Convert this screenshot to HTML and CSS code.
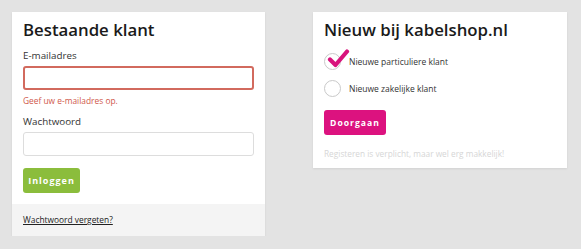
FILE: index.html
```html
<!DOCTYPE html>
<html>
    <head>
        <meta charset="utf-8">
        <title>Inloggen - kabelshop.nl</title>
        <link rel="stylesheet" href="styles.css">
    </head>
    <body>
        <main class="login">
            <section class="card">
                <div class="card-body">
                    <h2>Bestaande klant</h2>
                    <label class="field-label" for="email">E-mailadres</label>
                    <input class="field error" id="email" type="email">
                    <p class="field-error">Geef uw e-mailadres op.</p>
                    <label class="field-label" for="password">Wachtwoord</label>
                    <input class="field" id="password" type="password">
                    <button class="btn btn-green">Inloggen</button>
                </div>
                <div class="card-footer">
                    <a href="#">Wachtwoord vergeten?</a>
                </div>
            </section>
            <section class="card card-short">
                <div class="card-body">
                    <h2>Nieuw bij kabelshop.nl</h2>
                    <label class="choice">
                        <span class="radio checked">
                            <svg width="24" height="22" viewBox="0 0 24 22"><path d="M4 10.5 L9.5 16 L21 2.5" fill="none" stroke="#d8137c" stroke-width="4.2" stroke-linecap="round" stroke-linejoin="round"/></svg>
                        </span>
                        Nieuwe particuliere klant
                    </label>
                    <label class="choice">
                        <span class="radio"></span>
                        Nieuwe zakelijke klant
                    </label>
                    <button class="btn btn-pink">Doorgaan</button>
                    <p class="hint">Registeren is verplicht, maar wel erg makkelijk!</p>
                </div>
            </section>
        </main>
    </body>
</html>
```

FILE: styles.css
```css
html {background:#e3e3e3; color:#333; font-family:"Open Sans", "Liberation Sans", sans-serif;}
body {margin:0; padding:12px 14px 0 12px;}
.login {display:flex; gap:48px; align-items:flex-start;}
.card {width:253px; background:#fff; box-shadow:0 1px 2px rgba(0,0,0,0.08);}
.card-short {width:254px;}
.card-body {padding:6px 11px 11px 11px;}
.card-short .card-body {padding-bottom:8px;}
.card h2 {margin:0; font-size:16.8px; font-weight:600; color:#1a1a1a; line-height:24px;}
.field-label {display:block; font-size:9.8px; margin-top:7px; line-height:14px;}
.field-error + .field-label {margin-top:8px;}
.field {display:block; box-sizing:border-box; width:231px; height:24px; margin-top:3px; border:1px solid #ddd; border-radius:3px; background:#fff;}
.field.error {border:2px solid #d26a5e;}
.field-error {margin:5px 0 0; font-size:8.4px; color:#d0584b; line-height:12px;}
.btn {display:block; border:0; border-radius:3px; color:#fff; font-family:"Open Sans", sans-serif; font-weight:700; font-size:9px; letter-spacing:1px; padding:0; height:25px;}
.btn-green {width:57px; margin-top:12px; background:#8bbd3c;}
.btn-pink {width:62px; margin-top:13px; background:#dc127f; font-size:8.6px;}
.card-footer {background:#f4f4f4; padding:10px 11px 10px; font-size:8.4px; line-height:12px;}
.card-footer a {color:#222;}
.choice {display:flex; align-items:center; gap:8px; font-size:8.5px; color:#333; height:18px; margin-top:10px;}
.choice + .choice {margin-top:9px;}
.radio {position:relative; box-sizing:border-box; width:17px; height:17px; border:1px solid #c9c9c9; border-radius:50%;}
.radio svg {position:absolute; left:1px; top:-5px;}
.hint {margin:13px 0 0; font-size:8.3px; color:#d6d6d6; line-height:12px;}
```
